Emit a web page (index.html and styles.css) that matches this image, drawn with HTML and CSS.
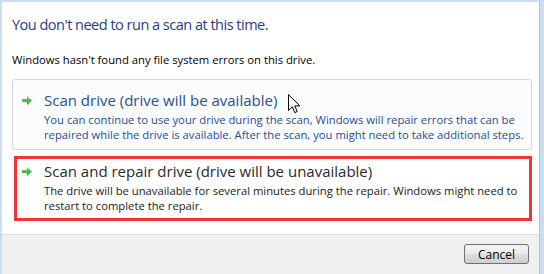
FILE: index.html
```html
<!DOCTYPE html>
<html lang="en">

<head>
    <meta charset="UTF-8">
    <meta name="viewport" content="width=device-width, initial-scale=1.0">
    <title>Check Disk</title>
    <link rel="stylesheet" href="styles.css">
</head>

<body>
    <div class="dialog">
        <div class="content">
            <h1 class="instruction">You don't need to run a scan at this time.</h1>
            <p class="message">Windows hasn't found any file system errors on this drive.</p>

            <div class="option hover">
                <svg class="arrow" width="10" height="9" viewBox="0 0 10 9">
                    <defs>
                        <linearGradient id="g1" x1="0" y1="0" x2="0" y2="1">
                            <stop offset="0" stop-color="#7fdc7f" />
                            <stop offset="1" stop-color="#1f9a2a" />
                        </linearGradient>
                    </defs>
                    <path d="M0 3h5V0l5 4.5L5 9V6H0z" fill="url(#g1)" />
                </svg>
                <div class="option-text">
                    <div class="option-title">Scan drive (drive will be available)</div>
                    <div class="option-desc">You can continue to use your drive during the scan, Windows will repair errors that can be<br>
                        repaired while the drive is available. After the scan, you might need to take additional steps.</div>
                </div>
            </div>

            <div class="option marked">
                <svg class="arrow" width="10" height="9" viewBox="0 0 10 9">
                    <defs>
                        <linearGradient id="g2" x1="0" y1="0" x2="0" y2="1">
                            <stop offset="0" stop-color="#7fdc7f" />
                            <stop offset="1" stop-color="#1f9a2a" />
                        </linearGradient>
                    </defs>
                    <path d="M0 3h5V0l5 4.5L5 9V6H0z" fill="url(#g2)" />
                </svg>
                <div class="option-text">
                    <div class="option-title">Scan and repair drive (drive will be unavailable)</div>
                    <div class="option-desc">The drive will be unavailable for several minutes during the repair. Windows might need to<br>
                        restart to complete the repair.</div>
                </div>
            </div>
        </div>

        <div class="footer">
            <button class="cancel">Cancel</button>
        </div>

        <svg class="cursor" width="13" height="20" viewBox="0 0 13 20">
            <path d="M0.5 0.5V16.5L4.3 12.8L6.8 18.6L9.2 17.6L6.8 11.9H11.8z" fill="#fff" stroke="#000" stroke-width="1" stroke-linejoin="round" />
        </svg>
    </div>
</body>

</html>
```

FILE: styles.css
```css
html,
body {
    margin: 0;
    padding: 0;
    width: 100%;
    height: 100%;
}

body {
    background-color: #cadef3;
    font-family: "Open Sans", "Noto Sans", sans-serif;
    color: #000;
}

.dialog {
    position: relative;
    height: 272px;
    margin: 2px 4px 0 2px;
    border-right: 1px solid #b4c6da;
    background-color: #fff;
    display: flex;
    flex-direction: column;
}

.content {
    padding: 0 7px 0 10px;
}

.instruction {
    margin: 13px 0 0;
    font-size: 14.5px;
    letter-spacing: -0.5px;
    line-height: 20px;
    font-weight: normal;
    color: #1f3d87;
}

.message {
    margin: 17px 0 0;
    font-size: 11.25px;
    line-height: 15px;
}

.option {
    display: flex;
    box-sizing: border-box;
    height: 71px;
    margin-top: 12px;
    padding: 10px 4px 0 9px;
    border: 1px solid #d4d8de;
    border-radius: 3px;
    background-color: #fbfcfd;
}

.option.marked {
    height: 65px;
    margin: 6px 0 0 2px;
    padding: 2px 4px 0 5px;
    border: 3px solid #f2333b;
    border-radius: 0;
    background-color: #fff;
}

.arrow {
    flex: none;
    margin: 6px 12px 0 0;
}

.option-text {
    white-space: nowrap;
}

.option-title {
    font-size: 15px;
    line-height: 20px;
    margin-bottom: 2px;
    color: #2b4f93;
}

.option-desc {
    font-size: 11.25px;
    line-height: 15px;
    color: #1f4c98;
}

.marked .option-title {
    color: #2a2a2a;
}

.marked .option-desc {
    color: #1a1a1a;
}

.footer {
    margin-top: auto;
    height: 40px;
    border-top: 1px solid #dfdfdf;
    background-color: #f0f0f0;
    display: flex;
    justify-content: flex-end;
    align-items: flex-start;
    padding: 9px 10px 0 0;
    box-sizing: border-box;
}

.cancel {
    width: 65px;
    height: 20px;
    padding: 0;
    border: 1px solid #707070;
    border-radius: 3px;
    background: linear-gradient(#f4f4f4 0%, #ebebeb 50%, #dddddd 51%, #cfcfcf 100%);
    font-family: inherit;
    font-size: 12px;
    color: #000;
}

.cursor {
    position: absolute;
    left: 286px;
    top: 92px;
}
```
